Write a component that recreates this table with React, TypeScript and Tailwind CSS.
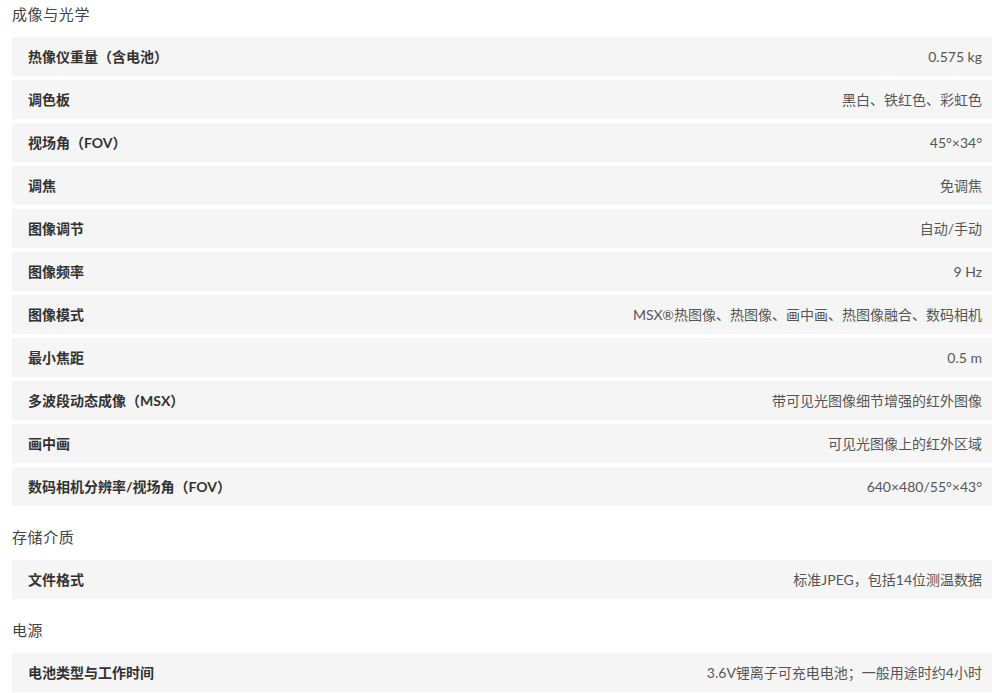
import React from "react";

type Row = [string, string];

const sections: { title: string; rows: Row[] }[] = [
  {
    title: "成像与光学",
    rows: [
      ["热像仪重量（含电池）", "0.575 kg"],
      ["调色板", "黑白、铁红色、彩虹色"],
      ["视场角（FOV）", "45°×34°"],
      ["调焦", "免调焦"],
      ["图像调节", "自动/手动"],
      ["图像频率", "9 Hz"],
      ["图像模式", "MSX®热图像、热图像、画中画、热图像融合、数码相机"],
      ["最小焦距", "0.5 m"],
      ["多波段动态成像（MSX）", "带可见光图像细节增强的红外图像"],
      ["画中画", "可见光图像上的红外区域"],
      ["数码相机分辨率/视场角（FOV）", "640×480/55°×43°"],
    ],
  },
  {
    title: "存储介质",
    rows: [["文件格式", "标准JPEG，包括14位测温数据"]],
  },
  {
    title: "电源",
    rows: [["电池类型与工作时间", "3.6V锂离子可充电电池；一般用途时约4小时"]],
  },
];

export default function App() {
  return (
    <div
      className="w-[992px] bg-white pl-[12px]"
      style={{ fontFamily: '"Lato", "Noto Sans CJK SC", sans-serif' }}
    >
      {sections.map((s, si) => (
        <div key={s.title} className={si === 0 ? "" : "mt-[17px]"}>
          <div className="h-[28px] flex items-center text-[15px] tracking-[0.6px] text-[#444]">
            {s.title}
          </div>
          <div className="mt-[9px] flex flex-col gap-[4px]">
            {s.rows.map(([k, v]) => (
              <div
                key={k}
                className="h-[39px] bg-[#f5f5f5] flex items-center justify-between pl-[16px] pr-[10px]"
              >
                <span className="text-[14px] font-bold text-[#333]">{k}</span>
                <span className="text-[14px] text-[#555]">{v}</span>
              </div>
            ))}
          </div>
        </div>
      ))}
    </div>
  );
}
